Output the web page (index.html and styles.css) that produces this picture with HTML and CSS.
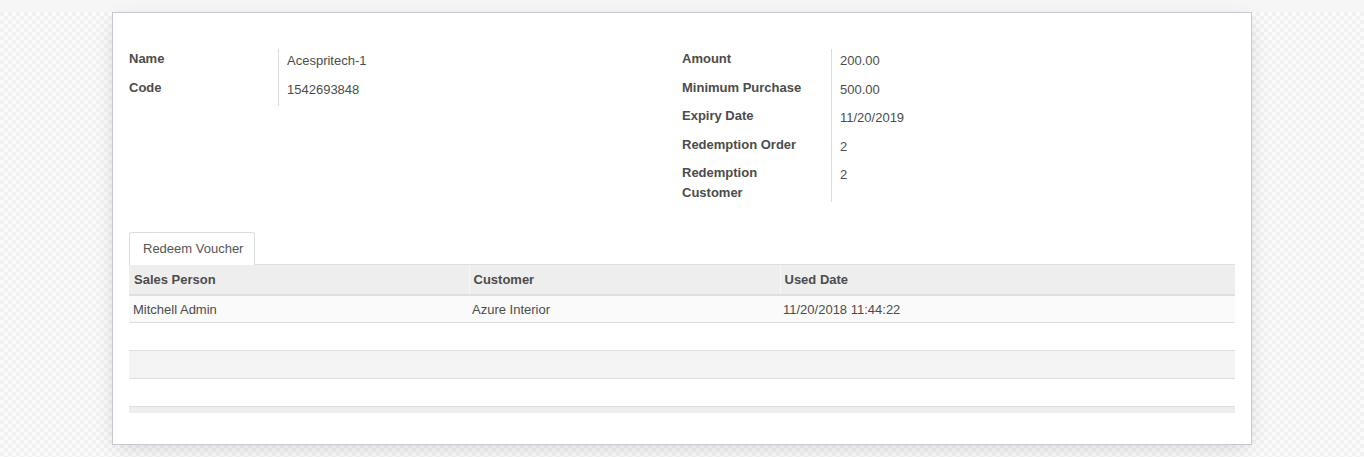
FILE: index.html
```html
<!DOCTYPE html>
<html>
<head>
<meta charset="utf-8">
<link rel="stylesheet" href="styles.css">
</head>
<body>
<div class="page">
  <div class="sheet">
    <div class="groups">
      <div class="group">
        <div class="lbl">Name</div><div class="val">Acespritech-1</div>
        <div class="lbl">Code</div><div class="val">1542693848</div>
      </div>
      <div class="group">
        <div class="lbl">Amount</div><div class="val">200.00</div>
        <div class="lbl">Minimum Purchase</div><div class="val">500.00</div>
        <div class="lbl">Expiry Date</div><div class="val">11/20/2019</div>
        <div class="lbl">Redemption Order</div><div class="val">2</div>
        <div class="lbl">Redemption Customer</div><div class="val">2</div>
      </div>
    </div>
    <div class="notebook">
      <div class="tabs"><div class="tab">Redeem Voucher</div></div>
      <table class="list">
        <colgroup>
          <col class="c1"><col class="c2"><col class="c3">
        </colgroup>
        <thead>
          <tr><th>Sales Person</th><th>Customer</th><th>Used Date</th></tr>
        </thead>
        <tbody>
          <tr class="odd"><td>Mitchell Admin</td><td>Azure Interior</td><td>11/20/2018 11:44:22</td></tr>
          <tr><td></td><td></td><td></td></tr>
          <tr class="even"><td></td><td></td><td></td></tr>
          <tr><td></td><td></td><td></td></tr>
        </tbody>
        <tfoot>
          <tr><td></td><td></td><td></td></tr>
        </tfoot>
      </table>
    </div>
  </div>
</div>
</body>
</html>
```
FILE: styles.css
```css
html, body {
  margin: 0;
  padding: 0;
}
body {
  font-family: "Liberation Sans", Arial, sans-serif;
  font-size: 13px;
  line-height: 1.5;
  color: #4c4c4c;
  background-color: #fbfbfb;
  background-image: conic-gradient(#f1f1f1 25%, transparent 0 50%, #f1f1f1 0 75%, transparent 0);
  background-size: 8px 8px;
  height: 457px;
  overflow: hidden;
}
.page {
  padding-top: 12px;
  background: linear-gradient(#f6f6f6, #f6f6f6) no-repeat;
  background-size: 100% 12px;
}
.sheet {
  box-sizing: border-box;
  width: 1140px;
  margin-left: 112px;
  height: 433px;
  background: #fff;
  border: 1px solid #c9c8d2;
  box-shadow: 0 5px 20px -5px rgba(0, 0, 0, 0.18);
  padding: 36px 15px 0 16px;
}
.groups {
  display: flex;
}
.group {
  width: 553px;
  display: grid;
  grid-template-columns: 150px 1fr;
  align-content: start;
}
.lbl {
  font-weight: bold;
  border-right: 1px solid #dcdcdc;
  padding-right: 15px;
  line-height: 19.5px;
}
.val {
  padding: 2px 0 7px 8px;
  line-height: 19.5px;
}
.notebook {
  margin-top: 30px;
}
.tabs {
  display: flex;
}
.tab {
  border: 1px solid #dcdcdc;
  border-bottom: none;
  border-radius: 3px 3px 0 0;
  padding: 6px 11px 6px 13px;
  line-height: 19.5px;
  color: #555;
  background: #fff;
  margin-bottom: -1px;
}
.list {
  width: 1106px;
  border-collapse: collapse;
  table-layout: fixed;
}
.c1 { width: 340px; }
.c2 { width: 311px; }
.c3 { width: 455px; }
.list th {
  text-align: left;
  font-weight: bold;
  background: #eeeeee;
  border-top: 1px solid #dfdfe3;
  border-bottom: 2px solid #dfdfe3;
  height: 28px;
  padding: 1px 4px 0 5px;
  line-height: 19.5px;
}
.list th + th {
  border-left: 1px solid #f7f7f7;
  padding-left: 4px;
}
.list td {
  padding: 1px 4px 0 4px;
  height: 26px;
  border-bottom: 1px solid #dfdfe3;
}
.list td + td { padding-left: 3px; }
.list tr.odd td { background: #fafafa; height: 24px; padding-top: 2px; }
.list tr.even td { background: #f4f4f4; }
.list tfoot td {
  height: 6px;
  padding: 0;
  background: #eeeeee;
  border-top: 1px solid #dfdfe3;
  border-bottom: none;
}
```
